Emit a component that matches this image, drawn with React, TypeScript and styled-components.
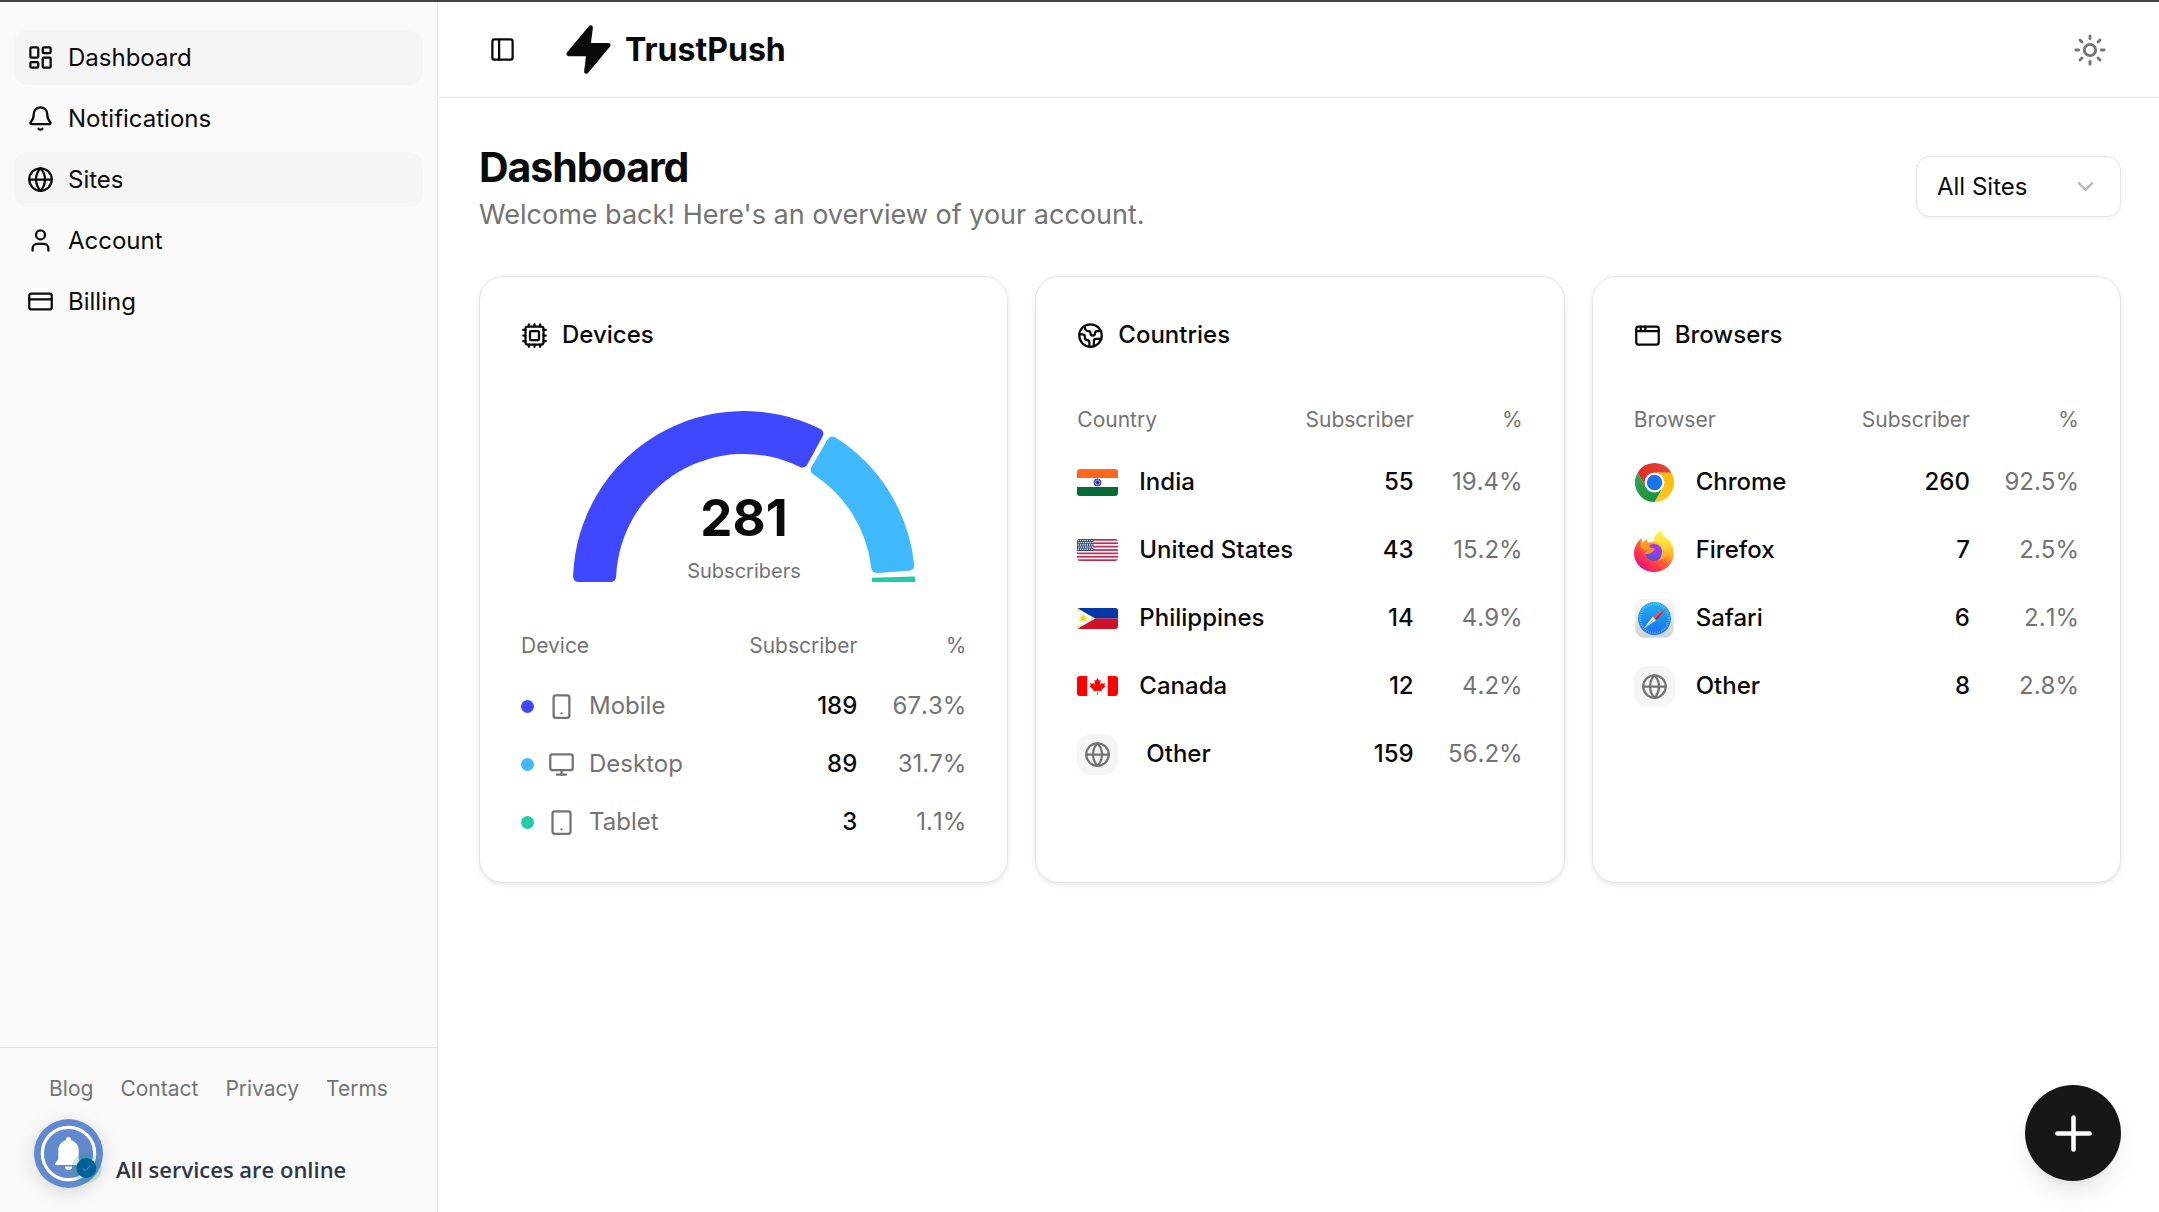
import React from 'react';
import styled, { createGlobalStyle } from 'styled-components';
import {
  AppWindow,
  Bell,
  ChevronDown,
  Cpu,
  CreditCard,
  Earth,
  Globe,
  LayoutDashboard,
  Monitor,
  PanelLeft,
  Plus,
  Smartphone,
  Sun,
  Tablet,
  User,
} from 'lucide-react';

const color = {
  ink: '#0a0a0a',
  muted: '#737373',
  line: '#e5e5e5',
  soft: '#f5f5f5',
  sidebar: '#fafafa',
};

const GlobalStyle = createGlobalStyle`
  * { box-sizing: border-box; }
  body {
    margin: 0;
    background: #fff;
    color: ${color.ink};
    font-family: Inter, sans-serif;
    font-size: 24px;
    line-height: 34px;
  }
  button, select { font: inherit; color: inherit; }
  h1, h2, p, ul { margin: 0; padding: 0; }
`;

const Shell = styled.div`
  display: flex;
  min-height: 100vh;
  border-top: 2px solid #444;
`;

/* ---------- Sidebar ---------- */

const Sidebar = styled.aside`
  display: flex;
  flex-direction: column;
  justify-content: space-between;
  flex: none;
  width: 438px;
  background: ${color.sidebar};
  border-right: 1px solid ${color.line};
`;

const NavList = styled.ul`
  display: flex;
  flex-direction: column;
  gap: 6px;
  padding: 28px 14px;
  list-style: none;
`;

const NavLink = styled.a<{ $filled?: boolean }>`
  display: flex;
  align-items: center;
  gap: 14px;
  height: 55px;
  padding: 0 13px;
  border-radius: 14px;
  background: ${(p) => (p.$filled ? color.soft : 'transparent')};
  color: ${color.ink};
  text-decoration: none;
`;

const SidebarFooter = styled.footer`
  display: flex;
  flex-direction: column;
  gap: 46px;
  height: 165px;
  padding-top: 24px;
  border-top: 1px solid ${color.line};
`;

const FooterLinks = styled.nav`
  display: flex;
  justify-content: center;
  gap: 27px;
`;

const FooterLink = styled.a`
  color: ${color.muted};
  font-size: 21px;
  text-decoration: none;
`;

const Status = styled.div`
  padding-left: 116px;
  color: #2d3748;
  font-family: 'Open Sans', 'Noto Sans', sans-serif;
  font-size: 22px;
  font-weight: 600;
  white-space: nowrap;
`;

const BellButton = styled.button`
  position: fixed;
  left: 34px;
  bottom: 24px;
  width: 69px;
  height: 69px;
  padding: 0;
  border: 0;
  border-radius: 50%;
  background: none;
  box-shadow: 0 4px 20px rgba(0, 0, 0, 0.15);
`;

/* ---------- Main column ---------- */

const Content = styled.div`
  flex: 1;
  min-width: 0;
`;

const Topbar = styled.header`
  display: flex;
  align-items: center;
  height: 96px;
  padding: 0 38px 0 41px;
  border-bottom: 1px solid ${color.line};
`;

const IconButton = styled.button<{ $size: number }>`
  display: grid;
  place-items: center;
  width: ${(p) => p.$size}px;
  height: ${(p) => p.$size}px;
  padding: 0;
  border: 0;
  background: none;
`;

const Brand = styled.a`
  display: flex;
  align-items: center;
  gap: 10px;
  margin-left: 37px;
  margin-right: auto;
  color: ${color.ink};
  font-size: 32px;
  font-weight: 700;
  text-decoration: none;
`;

const ThemeButton = styled(IconButton)`
  color: ${color.muted};
`;

const Main = styled.main`
  padding: 41px 38px 41px 41px;
`;

const PageHead = styled.div`
  display: flex;
  align-items: center;
  justify-content: space-between;
  margin-bottom: 42px;
`;

const Title = styled.h1`
  font-size: 41px;
  font-weight: 700;
  line-height: 56px;
  letter-spacing: -0.025em;
`;

const Subtitle = styled.p`
  color: ${color.muted};
  font-size: 27px;
  line-height: 39px;
`;

const SelectWrap = styled.div`
  position: relative;
  width: 205px;
  color: #b9b9b9;

  svg {
    position: absolute;
    right: 22px;
    top: 17px;
    pointer-events: none;
  }
`;

const Select = styled.select`
  width: 100%;
  height: 61px;
  padding: 0 20px;
  appearance: none;
  border: 1px solid ${color.line};
  border-radius: 14px;
  background: #fff;
  color: ${color.ink};
  box-shadow: 0 2px 4px rgba(0, 0, 0, 0.05);
`;

const Cards = styled.div`
  display: grid;
  grid-template-columns: repeat(3, minmax(0, 1fr));
  gap: 27px;
`;

const Card = styled.section`
  display: flex;
  flex-direction: column;
  padding: 41px 41px 31px;
  border: 1px solid ${color.line};
  border-radius: 24px;
  background: #fff;
  box-shadow: 0 2px 5px rgba(0, 0, 0, 0.1);
`;

const CardTitle = styled.h2`
  display: flex;
  align-items: center;
  gap: 14px;
  margin-bottom: 40px;
  font-size: 24px;
  font-weight: 500;
`;

const Gauge = styled.svg`
  display: block;
  align-self: center;
  width: 344px;
  height: 172px;
  margin: 18px 0 33px;
  overflow: visible;
`;

const GaugeValue = styled.text`
  fill: ${color.ink};
  font-size: 51px;
  font-weight: 700;
  text-anchor: middle;
`;

const GaugeLabel = styled.text`
  fill: ${color.muted};
  font-size: 20px;
  text-anchor: middle;
`;

const Table = styled.table<{ $headHeight: number; $rowHeight: number }>`
  width: 100%;
  border-collapse: collapse;
  table-layout: fixed;

  th { height: ${(p) => p.$headHeight}px; }
  td { height: ${(p) => p.$rowHeight}px; }
`;

const Th = styled.th<{ $width?: number; $end?: boolean }>`
  width: ${(p) => (p.$width ? `${p.$width}px` : 'auto')};
  padding: 0;
  color: ${color.muted};
  font-size: 21px;
  font-weight: 400;
  text-align: ${(p) => (p.$end ? 'right' : 'left')};
`;

const Td = styled.td<{ $strong?: boolean }>`
  padding: 0;
  color: ${(p) => (p.$strong ? color.ink : color.muted)};
  font-weight: ${(p) => (p.$strong ? 500 : 400)};
  text-align: right;
`;

const ShareTd = styled(Td)`
  font-kerning: none;
`;

const NameTd = styled(Td)`
  text-align: left;
`;

const Name = styled.span<{ $gap: number }>`
  display: flex;
  align-items: center;
  gap: ${(p) => p.$gap}px;
`;

const Dot = styled.span<{ $color: string }>`
  width: 13px;
  height: 13px;
  border-radius: 50%;
  background: ${(p) => p.$color};
`;

const IconTile = styled.span`
  display: grid;
  place-items: center;
  width: 41px;
  height: 41px;
  border-radius: 14px;
  background: ${color.soft};
  color: ${color.muted};
`;

const IconSlot = styled.span`
  display: grid;
  place-items: center;
  width: 41px;
  height: 41px;
`;

const FlagSvg = styled.svg`
  display: block;
  width: 41px;
  border-radius: 3px;
`;

const AddButton = styled.button`
  position: fixed;
  right: 38px;
  bottom: 31px;
  display: grid;
  place-items: center;
  width: 96px;
  height: 96px;
  padding: 0;
  border: 0;
  border-radius: 50%;
  background: #171717;
  color: #fff;
  box-shadow: 0 16px 26px -5px rgba(0, 0, 0, 0.1), 0 6px 10px -6px rgba(0, 0, 0, 0.1);
`;

/* ---------- Drawings ---------- */

const Bolt = () => (
  <svg width="53" height="53" viewBox="0 0 24 24" fill="currentColor" stroke="currentColor" strokeWidth="2" strokeLinecap="round" strokeLinejoin="round" aria-hidden="true">
    <polygon points="13 2 3 14 12 14 11 22 21 10 12 10 13 2" />
  </svg>
);

const BellBadge = () => (
  <svg width="69" height="69" viewBox="0 0 69 69" aria-hidden="true">
    <circle cx="34.500" cy="34.500" r="34.500" fill="#6288cd" />
    <circle cx="34.500" cy="34.500" r="26.200" fill="none" stroke="#fff" strokeWidth="3.200" />
    <path d="M34.500 18c1.500 0 2.600 1.100 2.600 2.600v.7c4.600 1.200 7.600 5.200 7.600 9.900v9l3.300 4.300v1.600H21v-1.600l3.300-4.300v-9c0-4.700 3-8.700 7.600-9.900v-.7c0-1.500 1.100-2.600 2.600-2.600z" fill="#fff" />
    <path d="M31 47.600h7a3.500 3.500 0 0 1-7 0z" fill="#fff" />
    <circle cx="52.800" cy="49" r="15" fill="#2b9c78" fillOpacity=".24" />
    <circle cx="52.300" cy="49" r="10" fill="#01609a" />
    <path d="M48.500 49l3 3 5-5.500" fill="none" stroke="#2f86ad" strokeWidth="1.200" />
  </svg>
);

const polar = (r: number, deg: number) => {
  const a = (deg * Math.PI) / 180;
  return [172 + r * Math.cos(a), 172 - r * Math.sin(a)];
};

/* An annular sector from one angle down to another, with corners rounded by c. */
const sector = (from: number, to: number, c: number) => {
  const R = 171;
  const r = 128;
  const pt = (radius: number, deg: number) => polar(radius, deg).map((n) => n.toFixed(2)).join(' ');
  const da = (c / R) * (180 / Math.PI);
  const db = (c / r) * (180 / Math.PI);
  const big = from - to > 180 ? 1 : 0;
  return [
    `M${pt(R - c, from)}`,
    `Q${pt(R, from)} ${pt(R, from - da)}`,
    `A${R} ${R} 0 ${big} 1 ${pt(R, to + da)}`,
    `Q${pt(R, to)} ${pt(R - c, to)}`,
    `L${pt(r + c, to)}`,
    `Q${pt(r, to)} ${pt(r, to + db)}`,
    `A${r} ${r} 0 ${big} 0 ${pt(r, from - db)}`,
    `Q${pt(r, from)} ${pt(r + c, from)}`,
    'Z',
  ].join('');
};

const India = () => (
  <FlagSvg viewBox="0 0 41 27" role="img" aria-label="Flag of India">
    <rect width="41" height="27" fill="#fff" />
    <rect width="41" height="9" fill="#ff671f" />
    <rect y="18" width="41" height="9" fill="#046a38" />
    <circle cx="20.500" cy="13.500" r="3.600" fill="#9a9ad4" stroke="#3a3ab0" strokeWidth=".9" />
    {[0, 45, 90, 135].map((a) => (
      <path key={a} d="M17 13.500h7" stroke="#3a3ab0" strokeWidth=".6" transform={`rotate(${a} 20.500 13.500)`} />
    ))}
    <circle cx="20.500" cy="13.500" r="1.200" fill="#2020a0" />
  </FlagSvg>
);

const UnitedStates = () => (
  <FlagSvg viewBox="0 0 41 22" role="img" aria-label="Flag of the United States">
    <rect width="41" height="22" fill="#fff" />
    {[0, 1, 2, 3, 4, 5, 6].map((i) => (
      <rect key={i} y={(i * 44) / 13} width="41" height={22 / 13} fill="#bf2a50" />
    ))}
    <rect width="16.400" height="11.850" fill="#1d3a6b" />
    {[0, 1, 2, 3, 4].map((row) =>
      [0, 1, 2, 3, 4, 5, 6].map((col) => (
        <rect key={`${row}-${col}`} x={0.6 + col * 2.25 + (row % 2) * 0.7} y={0.8 + row * 2.2} width="1.350" height="1.350" fill="#fff" />
      )),
    )}
  </FlagSvg>
);

const Philippines = () => (
  <FlagSvg viewBox="0 0 41 21" role="img" aria-label="Flag of the Philippines">
    <rect width="41" height="10.500" fill="#0038a8" />
    <rect y="10.500" width="41" height="10.500" fill="#ce1126" />
    <path d="M0 0l18.200 10.500L0 21z" fill="#fff" />
    <circle cx="6.300" cy="10.500" r="2.200" fill="#fcd116" />
    {[0, 45, 90, 135].map((a) => (
      <path key={a} d="M2.300 10.500h8" stroke="#fcd116" strokeWidth="1" transform={`rotate(${a} 6.300 10.500)`} />
    ))}
    <circle cx="1.500" cy="2.600" r=".8" fill="#fcd116" />
    <circle cx="1.500" cy="18.400" r=".8" fill="#fcd116" />
    <circle cx="15" cy="10.500" r=".8" fill="#fcd116" />
  </FlagSvg>
);

const Canada = () => (
  <FlagSvg viewBox="0 0 9600 4800" role="img" aria-label="Flag of Canada">
    <path fill="#f00" d="M0 0h2400l99 99h4602l99-99h2400v4800H7200l-99-99H2499l-99 99H0z" />
    <path fill="#fff" d="M2400 0h4800v4800H2400zm2490 4430-45-863a95 95 0 0 1 111-98l859 151-116-320a65 65 0 0 1 20-73l941-762-212-99a65 65 0 0 1-34-79l186-572-542 115a65 65 0 0 1-73-38l-105-247-423 454a65 65 0 0 1-111-57l204-1052-327 189a65 65 0 0 1-91-27l-332-652-332 652a65 65 0 0 1-91 27l-327-189 204 1052a65 65 0 0 1-111 57l-423-454-105 247a65 65 0 0 1-73 38l-542-115 186 572a65 65 0 0 1-34 79l-212 99 941 762a65 65 0 0 1 20 73l-116 320 859-151a95 95 0 0 1 111 98l-45 863z" />
  </FlagSvg>
);

const ChromeLogo = () => (
  <svg width="39" height="39" viewBox="0 0 48 48" aria-hidden="true">
    <defs>
      <linearGradient id="c-red" x1="3.200" y1="15" x2="44.800" y2="15" gradientUnits="userSpaceOnUse">
        <stop offset="0" stopColor="#d93025" />
        <stop offset="1" stopColor="#ea4335" />
      </linearGradient>
      <linearGradient id="c-yellow" x1="20.700" y1="47.700" x2="41.500" y2="11.700" gradientUnits="userSpaceOnUse">
        <stop offset="0" stopColor="#fcc934" />
        <stop offset="1" stopColor="#fbbc04" />
      </linearGradient>
      <linearGradient id="c-green" x1="26.600" y1="46.500" x2="5.800" y2="10.500" gradientUnits="userSpaceOnUse">
        <stop offset="0" stopColor="#1e8e3e" />
        <stop offset="1" stopColor="#34a853" />
      </linearGradient>
    </defs>
    <path fill="url(#c-red)" d="M3.215 12A24 24 0 0 1 44.785 12H24A12 12 0 0 0 13.608 30z" />
    <path fill="url(#c-yellow)" d="M44.785 12A24 24 0 0 1 24 48L34.392 30A12 12 0 0 0 24 12z" />
    <path fill="url(#c-green)" d="M24 48A24 24 0 0 1 3.215 12L13.608 30A12 12 0 0 0 34.392 30z" />
    <circle cx="24" cy="24" r="12" fill="#fff" />
    <circle cx="24" cy="24" r="9.500" fill="#1a73e8" />
  </svg>
);

const FirefoxLogo = () => (
  <svg width="40" height="42" viewBox="0 0 80 84" aria-hidden="true">
    <defs>
      <linearGradient id="f-body" x1="66" y1="16" x2="16" y2="76" gradientUnits="userSpaceOnUse">
        <stop offset="0" stopColor="#fff044" />
        <stop offset=".3" stopColor="#ffb02e" />
        <stop offset=".55" stopColor="#ff5a36" />
        <stop offset=".8" stopColor="#ff2f52" />
        <stop offset="1" stopColor="#e31587" />
      </linearGradient>
      <linearGradient id="f-flame" x1="54" y1="0" x2="66" y2="64" gradientUnits="userSpaceOnUse">
        <stop offset="0" stopColor="#fff44f" />
        <stop offset=".5" stopColor="#ffd83a" />
        <stop offset="1" stopColor="#ff8a1f" />
      </linearGradient>
      <linearGradient id="f-head" x1="10" y1="18" x2="44" y2="50" gradientUnits="userSpaceOnUse">
        <stop offset="0" stopColor="#ffa51f" />
        <stop offset="1" stopColor="#ff8a16" />
      </linearGradient>
      <radialGradient id="f-globe" cx="46" cy="32" r="34" gradientUnits="userSpaceOnUse">
        <stop offset="0" stopColor="#b233e8" />
        <stop offset=".6" stopColor="#7a48e6" />
        <stop offset="1" stopColor="#4d4fc0" />
      </radialGradient>
    </defs>
    <path fill="url(#f-body)" d="M76 29c-3-6-6-9-9-11l-6-4C58 10 55 6 54 0c-8 6-13 14-13 23L27 26l-1-7c-3 1-6 4-8 7-3-2-3-7-3-10C7 23 0 35 0 46c0 21 18 38 40 38s40-17 40-38c0-7-2-13-4-17z" />
    <circle cx="40" cy="45" r="17" fill="url(#f-globe)" />
    <path fill="url(#f-flame)" d="M54 0c-9 6-15 14-15 24 10 0 17 8 17 18 0 9-3 15-7 19 12-1 22-12 21-26 4 4 5 10 4 17 4-10 3-22-7-31C60 15 55 9 54 0z" />
    <path fill="url(#f-head)" d="M15 16c-2 6-3 12-2 18 4 7 10 8 17 7-5 1-8 2-9 6 7 3 12-1 17-4 3-2 4-5 1-7-6 1-9-2-8-5 1-2 4-3 8-4-5-2-9-2-12-1l-1-7c-3 1-6 4-8 7-3-2-3-7-3-10z" />
  </svg>
);

const SafariLogo = () => (
  <svg width="39" height="39" viewBox="0 0 78 78" aria-hidden="true">
    <defs>
      <linearGradient id="s-tile" x1="0" y1="0" x2="0" y2="1">
        <stop offset="0" stopColor="#fdfdfd" />
        <stop offset="1" stopColor="#d0d0d0" />
      </linearGradient>
      <linearGradient id="s-dial" x1="0" y1="0" x2="0" y2="1">
        <stop offset="0" stopColor="#1fb1ee" />
        <stop offset="1" stopColor="#1a70f0" />
      </linearGradient>
    </defs>
    <rect x=".5" y=".5" width="77" height="77" rx="18" fill="url(#s-tile)" stroke="#e3e3e3" />
    <circle cx="39" cy="39" r="33" fill="url(#s-dial)" />
    <circle cx="39" cy="39" r="28.500" fill="none" stroke="#fff" strokeOpacity=".5" strokeWidth="4" strokeDasharray="1.200 2.530" />
    <path d="M63 18L35.500 35.500 39 39z" fill="#ff5150" />
    <path d="M63 18L42.500 42.500 39 39z" fill="#d0262b" />
    <path d="M17 60l18.500-24.500L39 39z" fill="#fff" />
    <path d="M17 60l25.500-17.500L39 39z" fill="#cfcfcf" />
  </svg>
);

/* ---------- Data ---------- */

const nav = [
  { label: 'Dashboard', icon: LayoutDashboard, filled: true },
  { label: 'Notifications', icon: Bell },
  { label: 'Sites', icon: Globe, filled: true },
  { label: 'Account', icon: User },
  { label: 'Billing', icon: CreditCard },
];

const devices = [
  { name: 'Mobile', icon: Smartphone, color: '#3f48ff', count: 189, share: '67.3%' },
  { name: 'Desktop', icon: Monitor, color: '#40b9ff', count: 89, share: '31.7%' },
  { name: 'Tablet', icon: Tablet, color: '#22cba5', count: 3, share: '1.1%' },
];

const OtherTile = () => (
  <IconTile>
    <Globe size={27} />
  </IconTile>
);

const countries = [
  { name: 'India', art: <India />, count: 55, share: '19.4%' },
  { name: 'United States', art: <UnitedStates />, count: 43, share: '15.2%' },
  { name: 'Philippines', art: <Philippines />, count: 14, share: '4.9%' },
  { name: 'Canada', art: <Canada />, count: 12, share: '4.2%' },
  { name: 'Other', art: <OtherTile />, count: 159, share: '56.2%', gap: 28 },
];

const browsers = [
  { name: 'Chrome', art: <IconSlot><ChromeLogo /></IconSlot>, count: 260, share: '92.5%' },
  { name: 'Firefox', art: <IconSlot><FirefoxLogo /></IconSlot>, count: 7, share: '2.5%' },
  { name: 'Safari', art: <IconSlot><SafariLogo /></IconSlot>, count: 6, share: '2.1%' },
  { name: 'Other', art: <OtherTile />, count: 8, share: '2.8%' },
];

const TableHead = ({ label }: { label: string }) => (
  <thead>
    <tr>
      <Th scope="col">{label}</Th>
      <Th scope="col" $width={120} $end>Subscriber</Th>
      <Th scope="col" $width={109} $end>%</Th>
    </tr>
  </thead>
);

type Row = { name: string; art: React.ReactNode; count: number; share: string; gap?: number };

const RankTable = ({ label, rows }: { label: string; rows: Row[] }) => (
  <Table $headHeight={56} $rowHeight={68}>
    <TableHead label={label} />
    <tbody>
      {rows.map((row) => (
        <tr key={row.name}>
          <NameTd $strong>
            <Name $gap={row.gap ?? 21}>
              {row.art}
              {row.name}
            </Name>
          </NameTd>
          <Td $strong>{row.count}</Td>
          <ShareTd>{row.share}</ShareTd>
        </tr>
      ))}
    </tbody>
  </Table>
);

const DeviceGauge = () => {
  const total = devices.reduce((sum, d) => sum + d.count, 0);
  const pad = 2;
  let angle = 180;
  return (
    <Gauge viewBox="0 0 344 172">
      {devices.map((d) => {
        const sweep = (d.count / total) * (180 - pad * (devices.length - 1));
        const path = sector(angle, angle - sweep, sweep > 5 ? 6 : 0);
        angle -= sweep + pad;
        return <path key={d.name} d={path} fill={d.color} />;
      })}
      <GaugeValue x="172" y="126">{total}</GaugeValue>
      <GaugeLabel x="172" y="168">Subscribers</GaugeLabel>
    </Gauge>
  );
};

export default function App() {
  return (
    <>
      <GlobalStyle />
      <Shell>
        <Sidebar>
          <nav>
            <NavList>
              {nav.map(({ label, icon: Icon, filled }) => (
                <li key={label}>
                  <NavLink href="#" $filled={filled}>
                    <Icon size={27} />
                    {label}
                  </NavLink>
                </li>
              ))}
            </NavList>
          </nav>
          <SidebarFooter>
            <FooterLinks>
              {['Blog', 'Contact', 'Privacy', 'Terms'].map((label) => (
                <FooterLink key={label} href="#">{label}</FooterLink>
              ))}
            </FooterLinks>
            <Status>All services are online</Status>
          </SidebarFooter>
        </Sidebar>

        <Content>
          <Topbar>
            <IconButton $size={46} aria-label="Toggle sidebar">
              <PanelLeft size={27} />
            </IconButton>
            <Brand href="#">
              <Bolt />
              TrustPush
            </Brand>
            <ThemeButton $size={62} aria-label="Toggle theme">
              <Sun size={34} />
            </ThemeButton>
          </Topbar>

          <Main>
            <PageHead>
              <div>
                <Title>Dashboard</Title>
                <Subtitle>Welcome back! Here's an overview of your account.</Subtitle>
              </div>
              <SelectWrap>
                <Select aria-label="Site" defaultValue="all">
                  <option value="all">All Sites</option>
                </Select>
                <ChevronDown size={27} />
              </SelectWrap>
            </PageHead>

            <Cards>
              <Card>
                <CardTitle>
                  <Cpu size={27} />
                  Devices
                </CardTitle>
                <DeviceGauge />
                <Table $headHeight={62} $rowHeight={58}>
                  <TableHead label="Device" />
                  <tbody>
                    {devices.map(({ name, icon: Icon, color: tint, count, share }) => (
                      <tr key={name}>
                        <NameTd>
                          <Name $gap={14}>
                            <Dot $color={tint} />
                            <Icon size={27} />
                            {name}
                          </Name>
                        </NameTd>
                        <Td $strong>{count}</Td>
                        <ShareTd>{share}</ShareTd>
                      </tr>
                    ))}
                  </tbody>
                </Table>
              </Card>

              <Card>
                <CardTitle>
                  <Earth size={27} />
                  Countries
                </CardTitle>
                <RankTable label="Country" rows={countries} />
              </Card>

              <Card>
                <CardTitle>
                  <AppWindow size={27} />
                  Browsers
                </CardTitle>
                <RankTable label="Browser" rows={browsers} />
              </Card>
            </Cards>
          </Main>
        </Content>
      </Shell>

      <BellButton aria-label="Notification settings">
        <BellBadge />
      </BellButton>
      <AddButton aria-label="Add">
        <Plus size={55} />
      </AddButton>
    </>
  );
}
